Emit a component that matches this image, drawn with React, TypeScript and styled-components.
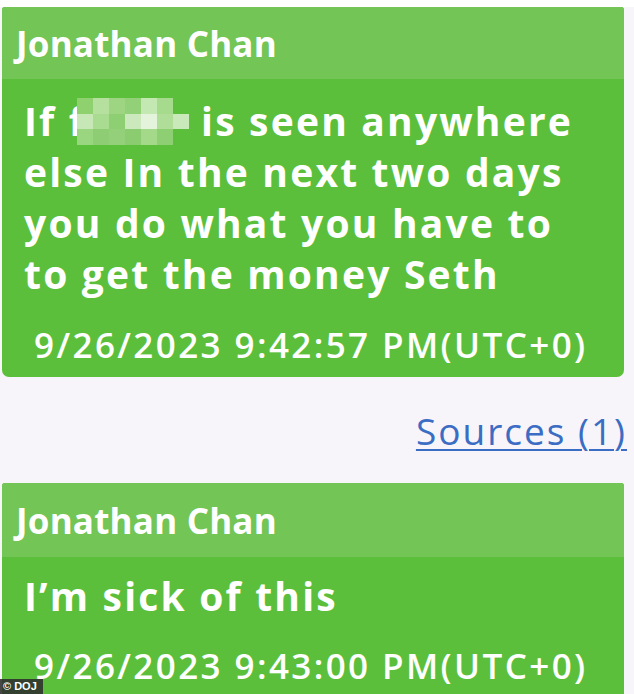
import React from "react";
import styled, { createGlobalStyle } from "styled-components";

const Global = createGlobalStyle`
  html, body { margin: 0; padding: 0; }
  body {
    background: #f7f5f9;
    width: 634px;
    height: 694px;
    overflow: hidden;
    font-family: "Open Sans", "Noto Sans", sans-serif;
  }
`;

const Page = styled.div`
  position: relative;
  width: 634px;
  height: 694px;
  overflow: hidden;
  background: #f7f5f9;
  border-top: 7px solid #ffffff;
  box-sizing: border-box;
  padding: 0 10px 0 2px;
  display: flex;
  flex-direction: column;
`;

const Card = styled.div`
  background: #5bbf3b;
  border-radius: 3px 3px 7px 7px;
  overflow: hidden;
  display: flex;
  flex-direction: column;
  flex-shrink: 0;
`;

const Header = styled.div<{ $h: number }>`
  height: ${(p) => p.$h}px;
  background: #73c556;
  color: #ffffff;
  font-weight: 700;
  font-size: 35px;
  letter-spacing: 0.2px;
  display: flex;
  align-items: center;
  padding-left: 14px;
  box-sizing: border-box;
  white-space: nowrap;
`;

const Body = styled.div<{ $pt: number }>`
  padding: ${(p) => p.$pt}px 0 0 22px;
  color: #ffffff;
`;

const Line = styled.div`
  font-weight: 700;
  font-size: 39px;
  line-height: 51px;
  height: 51px;
  letter-spacing: 2.2px;
  white-space: nowrap;
  display: flex;
  align-items: center;
`;

const Stamp = styled.div<{ $mt: number; $pb: number }>`
  margin-top: ${(p) => p.$mt}px;
  padding-bottom: ${(p) => p.$pb}px;
  padding-left: 10px;
  font-weight: 600;
  font-size: 35px;
  line-height: 40px;
  letter-spacing: 2.4px;
  white-space: nowrap;
`;

const Mosaic = styled.span`
  display: inline-grid;
  grid-template-columns: repeat(7, 16px);
  grid-template-rows: repeat(3, 15.5px);
  margin: 2px 12px 0 -9px;
`;

const Cell = styled.span<{ $c: string }>`
  background: ${(p) => p.$c};
`;

const SourcesRow = styled.div`
  height: 106px;
  display: flex;
  align-items: center;
  justify-content: flex-end;
  flex-shrink: 0;
`;

const SourcesLink = styled.a`
  color: #3b6dc4;
  font-size: 37px;
  font-weight: 400;
  letter-spacing: 2px;
  text-decoration: underline;
  text-decoration-thickness: 2px;
  text-underline-offset: 4px;
  margin-right: -3px;
  cursor: pointer;
`;

const Badge = styled.div`
  position: absolute;
  left: 0;
  bottom: 0;
  background: rgba(45, 45, 45, 0.88);
  color: #ffffff;
  font-family: "Liberation Sans", Arial, sans-serif;
  font-size: 11px;
  font-weight: 700;
  padding: 1px 6px 1px 3px;
  line-height: 13px;
`;

const mosaicColors = [
  "#8fd06f", "#b5e09e", "#9dd583", "#93d179", "#c4e8b2", "#a6da8c", "#5bbf3b",
  "#c7e8b6", "#a9dc90", "#8fcf74", "#cbe9bd", "#e3f3dc", "#b0de99", "#c9e9ba",
  "#9ad67f", "#8ecd73", "#93d079", "#8ccc71", "#a4d98a", "#8fcf74", "#5bbf3b",
];

export default function App() {
  return (
    <>
      <Global />
      <Page>
        <Card>
          <Header $h={72}>Jonathan Chan</Header>
          <Body $pt={16}>
            <Line>
              If f
              <Mosaic>
                {mosaicColors.map((c, i) => (
                  <Cell key={i} $c={c} />
                ))}
              </Mosaic>
              is seen anywhere
            </Line>
            <Line>else In the next two days</Line>
            <Line>you do what you have to</Line>
            <Line>to get the money Seth</Line>
            <Stamp $mt={26} $pb={12}>9/26/2023 9:42:57 PM(UTC+0)</Stamp>
          </Body>
        </Card>
        <SourcesRow>
          <SourcesLink>Sources (1)</SourcesLink>
        </SourcesRow>
        <Card>
          <Header $h={74}>Jonathan Chan</Header>
          <Body $pt={13}>
            <Line>I’m sick of this</Line>
            <Stamp $mt={25} $pb={20}>9/26/2023 9:43:00 PM(UTC+0)</Stamp>
          </Body>
        </Card>
        <Badge>© DOJ</Badge>
      </Page>
    </>
  );
}
